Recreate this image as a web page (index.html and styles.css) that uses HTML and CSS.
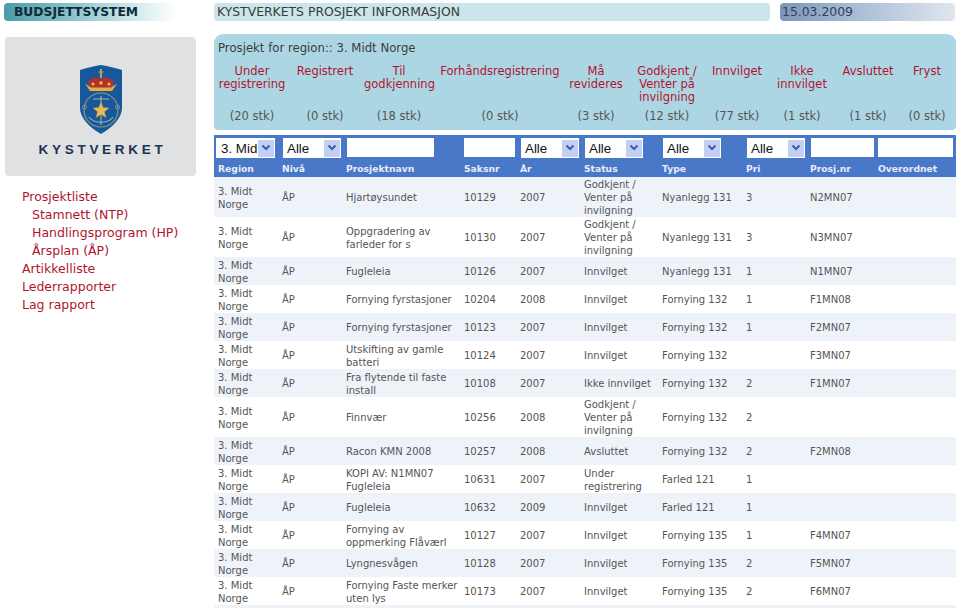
FILE: index.html
```html
<!DOCTYPE html>
<html lang="no">
<head>
<meta charset="utf-8">
<title>Budsjettsystem</title>
<link rel="stylesheet" href="styles.css">
</head>
<body>
<div class="page">
  <aside class="side">
    <div class="brand">BUDSJETTSYSTEM</div>
    <div class="logo">
      <svg class="shield" width="44" height="69" viewBox="0 0 44 69">
        <path d="M1 5C8 3 14 1 22 0C30 1 36 3 43 5V43C43 53 33 63 22 69C11 63 1 53 1 43Z" fill="#17589c"/>
        <path d="M22 4V13" stroke="#b9a25c" stroke-width="2"/>
        <path d="M19.500 7H24.500" stroke="#b9a25c" stroke-width="1.200"/>
        <path d="M9 17C13 12 18 12 22 14C26 12 31 12 35 17L32 23H12Z" fill="#b5302c"/>
        <path d="M6 18.500L11 26H33L38 18.500L32 22.500H12Z" fill="#e2b23f"/>
        <circle cx="14" cy="19" r="1.500" fill="#e8c65a"/><circle cx="22" cy="18" r="1.700" fill="#e8c65a"/><circle cx="30" cy="19" r="1.500" fill="#e8c65a"/>
        <circle cx="22" cy="45" r="17" fill="none" stroke="#8d9a78" stroke-width="1.100"/>
        <path d="M22 31V60M14 34H30M10 52C15 59 29 59 34 52" fill="none" stroke="#a8b3a0" stroke-width="1.100"/>
        <circle cx="5.500" cy="42" r="2" fill="none" stroke="#8d9a78"/><circle cx="38.500" cy="42" r="2" fill="none" stroke="#8d9a78"/>
        <path d="M22 37L24.200 42.500L30 43L25.500 46.800L27 52.500L22 49.400L17 52.500L18.500 46.800L14 43L19.800 42.500Z" fill="#e7bb55" stroke="#b98f33" stroke-width=".5"/>
      </svg>
      <div class="logotext">KYSTVERKET</div>
    </div>
    <nav class="menu">
      <a href="#">Prosjektliste</a>
      <a href="#" class="sub">Stamnett (NTP)</a>
      <a href="#" class="sub">Handlingsprogram (HP)</a>
      <a href="#" class="sub">Årsplan (ÅP)</a>
      <a href="#">Artikkelliste</a>
      <a href="#">Lederrapporter</a>
      <a href="#">Lag rapport</a>
    </nav>
  </aside>
  <main class="main">
    <header class="topbar">
      <div class="title">KYSTVERKETS PROSJEKT INFORMASJON</div>
      <div class="date">15.03.2009</div>
    </header>
    <section class="summary">
      <div class="regionline">Prosjekt for region:: 3. Midt Norge</div>
      <div class="stats">
        <a href="#">Under registrering</a><a href="#">Registrert</a><a href="#">Til godkjenning</a><a href="#">Forhåndsregistrering</a><a href="#">Må revideres</a><a href="#">Godkjent / Venter på invilgning</a><a href="#">Innvilget</a><a href="#">Ikke innvilget</a><a href="#">Avsluttet</a><a href="#">Fryst</a>
        <span>(20 stk)</span><span>(0 stk)</span><span>(18 stk)</span><span>(0 stk)</span><span>(3 stk)</span><span>(12 stk)</span><span>(77 stk)</span><span>(1 stk)</span><span>(1 stk)</span><span>(0 stk)</span>
      </div>
    </section>
    <table class="grid">
      <colgroup>
        <col class="c1"><col class="c2"><col class="c3"><col class="c4"><col class="c5"><col class="c6"><col class="c7"><col class="c8"><col class="c9"><col class="c10">
      </colgroup>
      <thead>
        <tr class="filters">
          <th><div class="sel first"><span>3. Mid</span><i><svg width="10" height="8" viewBox="0 0 10 8"><path d="M1.500 1.500L5 5L8.500 1.500" fill="none" stroke="#3d5ea8" stroke-width="2"/></svg></i></div></th>
          <th><div class="sel"><span>Alle</span><i><svg width="10" height="8" viewBox="0 0 10 8"><path d="M1.500 1.500L5 5L8.500 1.500" fill="none" stroke="#3d5ea8" stroke-width="2"/></svg></i></div></th>
          <th><div class="inp w-name"></div></th>
          <th><div class="inp w-sak"></div></th>
          <th><div class="sel"><span>Alle</span><i><svg width="10" height="8" viewBox="0 0 10 8"><path d="M1.500 1.500L5 5L8.500 1.500" fill="none" stroke="#3d5ea8" stroke-width="2"/></svg></i></div></th>
          <th><div class="sel"><span>Alle</span><i><svg width="10" height="8" viewBox="0 0 10 8"><path d="M1.500 1.500L5 5L8.500 1.500" fill="none" stroke="#3d5ea8" stroke-width="2"/></svg></i></div></th>
          <th><div class="sel"><span>Alle</span><i><svg width="10" height="8" viewBox="0 0 10 8"><path d="M1.500 1.500L5 5L8.500 1.500" fill="none" stroke="#3d5ea8" stroke-width="2"/></svg></i></div></th>
          <th><div class="sel"><span>Alle</span><i><svg width="10" height="8" viewBox="0 0 10 8"><path d="M1.500 1.500L5 5L8.500 1.500" fill="none" stroke="#3d5ea8" stroke-width="2"/></svg></i></div></th>
          <th><div class="inp w-nr"></div></th>
          <th><div class="inp w-over"></div></th>
        </tr>
        <tr class="labels">
          <th>Region</th><th>Nivå</th><th>Prosjektnavn</th><th>Saksnr</th><th>År</th><th>Status</th><th>Type</th><th>Pri</th><th>Prosj.nr</th><th>Overordnet</th>
        </tr>
      </thead>
      <tbody>
        <tr><td>3. Midt Norge</td><td>ÅP</td><td>Hjartøysundet</td><td>10129</td><td>2007</td><td>Godkjent / Venter på invilgning</td><td>Nyanlegg 131</td><td>3</td><td>N2MN07</td><td></td></tr>
        <tr><td>3. Midt Norge</td><td>ÅP</td><td>Oppgradering av farleder for s</td><td>10130</td><td>2007</td><td>Godkjent / Venter på invilgning</td><td>Nyanlegg 131</td><td>3</td><td>N3MN07</td><td></td></tr>
        <tr><td>3. Midt Norge</td><td>ÅP</td><td>Fugleleia</td><td>10126</td><td>2007</td><td>Innvilget</td><td>Nyanlegg 131</td><td>1</td><td>N1MN07</td><td></td></tr>
        <tr><td>3. Midt Norge</td><td>ÅP</td><td>Fornying fyrstasjoner</td><td>10204</td><td>2008</td><td>Innvilget</td><td>Fornying 132</td><td>1</td><td>F1MN08</td><td></td></tr>
        <tr><td>3. Midt Norge</td><td>ÅP</td><td>Fornying fyrstasjoner</td><td>10123</td><td>2007</td><td>Innvilget</td><td>Fornying 132</td><td>1</td><td>F2MN07</td><td></td></tr>
        <tr><td>3. Midt Norge</td><td>ÅP</td><td>Utskifting av gamle batteri</td><td>10124</td><td>2007</td><td>Innvilget</td><td>Fornying 132</td><td></td><td>F3MN07</td><td></td></tr>
        <tr><td>3. Midt Norge</td><td>ÅP</td><td>Fra flytende til faste install</td><td>10108</td><td>2007</td><td>Ikke innvilget</td><td>Fornying 132</td><td>2</td><td>F1MN07</td><td></td></tr>
        <tr><td>3. Midt Norge</td><td>ÅP</td><td>Finnvær</td><td>10256</td><td>2008</td><td>Godkjent / Venter på invilgning</td><td>Fornying 132</td><td>2</td><td></td><td></td></tr>
        <tr><td>3. Midt Norge</td><td>ÅP</td><td>Racon KMN 2008</td><td>10257</td><td>2008</td><td>Avsluttet</td><td>Fornying 132</td><td>2</td><td>F2MN08</td><td></td></tr>
        <tr><td>3. Midt Norge</td><td>ÅP</td><td>KOPI AV: N1MN07 Fugleleia</td><td>10631</td><td>2007</td><td>Under registrering</td><td>Farled 121</td><td>1</td><td></td><td></td></tr>
        <tr><td>3. Midt Norge</td><td>ÅP</td><td>Fugleleia</td><td>10632</td><td>2009</td><td>Innvilget</td><td>Farled 121</td><td>1</td><td></td><td></td></tr>
        <tr><td>3. Midt Norge</td><td>ÅP</td><td>Fornying av oppmerking Flåværl</td><td>10127</td><td>2007</td><td>Innvilget</td><td>Fornying 135</td><td>1</td><td>F4MN07</td><td></td></tr>
        <tr><td>3. Midt Norge</td><td>ÅP</td><td>Lyngnesvågen</td><td>10128</td><td>2007</td><td>Innvilget</td><td>Fornying 135</td><td>2</td><td>F5MN07</td><td></td></tr>
        <tr><td>3. Midt Norge</td><td>ÅP</td><td>Fornying Faste merker uten lys</td><td>10173</td><td>2007</td><td>Innvilget</td><td>Fornying 135</td><td>2</td><td>F6MN07</td><td></td></tr>
      </tbody>
    </table>
    <div class="tail"></div>
  </main>
</div>
</body>
</html>
```

FILE: styles.css
```css
* { box-sizing: border-box; }
html, body { margin: 0; height: 608px; overflow: hidden; background: #fff; }
body { font-family: "DejaVu Sans", Verdana, sans-serif; color: #555; }
a { color: #b0152f; text-decoration: none; }

.page { display: flex; align-items: flex-start; }

.side { width: 214px; flex: none; padding: 3px 0 0 4px; }
.brand {
  width: 172px; height: 18px; border-radius: 4px 0 0 4px;
  padding-left: 10px;
  font-size: 12.300px; line-height: 18px; font-weight: bold; color: #0f2a3a;
  background: linear-gradient(90deg, #4a9ca8 0%, #8cc4cc 40%, #d5ebee 78%, #fff 100%);
}
.logo {
  width: 191px; height: 139px; margin: 16px 0 0 1px; padding-top: 28px;
  background: #e0e1e3; border-radius: 4px;
  display: flex; flex-direction: column; align-items: center;
}
.shield { display: block; }
.logotext {
  margin-top: 8px; font: bold 13.500px/16px "Liberation Sans", Arial, sans-serif;
  letter-spacing: 3.700px; margin-right: -4px; color: #1c3352;
}
.menu { display: flex; flex-direction: column; padding: 12px 0 0 18px; font-size: 12.500px; line-height: 18px; }
.menu .sub { padding-left: 10px; }

.main { width: 742px; flex: none; padding-top: 3px; }
.topbar { display: flex; height: 18px; font-size: 12.400px; line-height: 18px; }
.title { width: 556px; padding-left: 3px; background: #cbe5ea; border-radius: 4px; color: #3a3a3a; }
.date {
  width: 175px; margin-left: 10px; padding-left: 2px; border-radius: 4px; color: #33415a;
  background: linear-gradient(90deg, #7c95b8 0%, #aabed6 45%, #e0e6ef 100%);
}

.summary {
  height: 96px; margin-top: 13px; padding: 8px 0 0 4px;
  background: #add6e4; border-radius: 9px 9px 4px 4px;
  font-size: 11.500px; line-height: 13px;
}
.regionline { height: 23px; color: #3c3c3c; font-size: 11.700px; }
.stats {
  display: grid;
  grid-template-columns: 68px 78px 70px 132px 60px 82px 58px 72px 60px 58px;
  grid-template-rows: 45px 13px;
  text-align: center;
}

.grid { width: 742px; margin-top: 5px; border-collapse: collapse; table-layout: fixed; font-size: 10px; line-height: 13px; }
.c1, .c2 { width: 64px; }
.c3 { width: 118px; }
.c4 { width: 56px; }
.c5 { width: 64px; }
.c6 { width: 78px; }
.c7 { width: 84px; }
.c8 { width: 64px; }
.c9 { width: 68px; }
.c10 { width: 82px; }

.filters th { height: 26px; padding: 3px 0 0 2px; background: #4a78c8; vertical-align: top; font-weight: normal; text-align: left; }
.labels th { height: 16px; padding: 0 4px; background: #4a78c8; color: #e6ecf8; font-weight: bold; font-size: 9.200px; text-align: left; line-height: 16px; }

.sel {
  display: flex; align-items: center; justify-content: space-between;
  width: 58px; height: 20px; margin-left: 3px; padding: 1px 1px 0 4px; background: #fff;
  font: 13.330px/18px "Liberation Sans", Arial, sans-serif; color: #111; white-space: nowrap;
}
.sel.first { width: 59px; margin-left: 0; padding-left: 5px; }
.sel i {
  display: flex; align-items: center; justify-content: center;
  width: 16px; height: 17px; margin-top: -1px; background: #c3d0f3;
}
.inp { height: 19px; background: #fff; }
.w-name { width: 87px; margin-left: 3px; }
.w-sak { width: 51px; margin-left: 2px; }
.w-nr { width: 63px; margin-left: 3px; }
.w-over { width: 75px; margin-left: 2px; }

tbody td { height: 28px; padding: 1px 0 0 4px; vertical-align: middle; overflow: hidden; }
tbody tr:nth-child(odd) td { background: #eef3fa; }
.tail { height: 20px; background: #eef3fa; }
```
